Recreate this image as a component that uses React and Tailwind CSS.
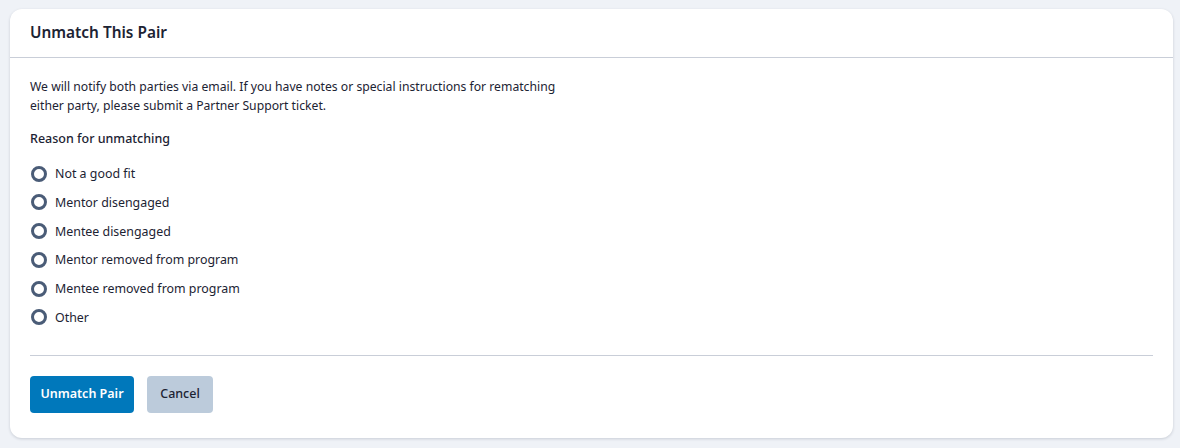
import React, { useState } from 'react'

const REASONS = [
  'Not a good fit',
  'Mentor disengaged',
  'Mentee disengaged',
  'Mentor removed from program',
  'Mentee removed from program',
  'Other',
]

export default function App() {
  const [reason, setReason] = useState(null)

  return (
    <div
      className="min-h-[448px] bg-[#eff2f7] pt-[9px] pl-[10px]"
      style={{ fontFamily: '"Noto Sans", "Open Sans", sans-serif' }}
    >
      <div className="w-[1163px] h-[429px] bg-white rounded-[12px] shadow-[0_1px_3px_rgba(30,40,60,0.18)] text-[#1c2333]">
        {/* Header */}
        <div className="h-[49px] flex items-center px-[20px] border-b border-[#c9ced8]">
          <h2 className="text-[15.4px] font-semibold">Unmatch This Pair</h2>
        </div>

        {/* Body */}
        <div className="px-[20px] pt-[19px]">
          <p className="text-[12.2px] leading-[19px] w-[540px]">
            We will notify both parties via email. If you have notes or special instructions for rematching
            either party, please submit a Partner Support ticket.
          </p>

          <p className="mt-[14px] text-[12.5px] font-medium leading-[19px]">Reason for unmatching</p>

          <div className="mt-[16px] flex flex-col gap-[9.8px]">
            {REASONS.map(r => (
              <label key={r} className="flex items-center gap-[8px] h-[19px] cursor-pointer">
                <input
                  type="radio"
                  name="reason"
                  checked={reason === r}
                  onChange={() => setReason(r)}
                  className="appearance-none w-[16px] h-[16px] ml-[1px] rounded-full border-[3px] border-[#4a5c77] checked:border-[5px] checked:border-[#0077b9]"
                />
                <span className="text-[12.4px] leading-[19px]">{r}</span>
              </label>
            ))}
          </div>

          <div className="mt-[28px] border-t border-[#c9ced8]" />

          {/* Actions */}
          <div className="mt-[20px] flex gap-[13px]">
            <button className="h-[37px] w-[104px] rounded-[4px] bg-[#0078bb] text-white text-[12.5px] font-semibold">
              Unmatch Pair
            </button>
            <button className="h-[37px] w-[66px] rounded-[4px] bg-[#bccbdb] text-[#1c2333] text-[12.5px] font-medium">
              Cancel
            </button>
          </div>
        </div>
      </div>
    </div>
  )
}
